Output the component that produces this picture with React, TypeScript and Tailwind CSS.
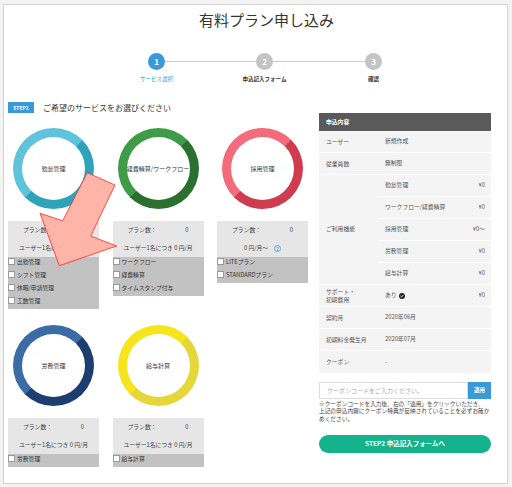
import React from "react";

type Service = {
  name: string;
  ring: string;
  perUser: boolean;
  options: string[];
};

const services: Service[] = [
  {
    name: "勤怠管理",
    ring: "bg-[conic-gradient(from_45deg,#2ea3ba_0_50%,#5fc3dc_50%_100%)]",
    perUser: true,
    options: ["出勤管理", "シフト管理", "休暇/申請管理", "工数管理"],
  },
  {
    name: "経費精算/ワークフロー",
    ring: "bg-[conic-gradient(from_45deg,#2b7030_0_50%,#3f9b48_50%_100%)]",
    perUser: true,
    options: ["ワークフロー", "経費精算", "タイムスタンプ付与"],
  },
  {
    name: "採用管理",
    ring: "bg-[conic-gradient(from_45deg,#cf3b4f_0_50%,#f36c7b_50%_100%)]",
    perUser: false,
    options: ["LITEプラン", "STANDARDプラン"],
  },
  {
    name: "労務管理",
    ring: "bg-[conic-gradient(from_45deg,#1d3e6e_0_50%,#3b6ca6_50%_100%)]",
    perUser: true,
    options: ["労務管理"],
  },
  {
    name: "給与計算",
    ring: "bg-[conic-gradient(from_45deg,#e5d63a_0_50%,#f6e41c_50%_100%)]",
    perUser: true,
    options: ["給与計算"],
  },
];

const features = [
  { name: "勤怠管理", price: "¥0" },
  { name: "ワークフロー/経費精算", price: "¥0" },
  { name: "採用管理", price: "¥0～" },
  { name: "労務管理", price: "¥0" },
  { name: "給与計算", price: "¥0" },
];

function QuestionIcon() {
  return (
    <svg width="7" height="7" viewBox="0 0 16 16" fill="none" stroke="#3a9ad9" strokeWidth="1.6">
      <circle cx="8" cy="8" r="7" />
      <path d="M5.8 6.2a2.3 2.3 0 0 1 4.4.6c0 1.5-2.2 1.8-2.2 3.2" strokeLinecap="round" />
      <circle cx="8" cy="12.1" r="0.6" fill="#3a9ad9" />
    </svg>
  );
}

function CheckBadge() {
  return (
    <svg width="6" height="6" viewBox="0 0 16 16">
      <circle cx="8" cy="8" r="8" fill="#222" />
      <path d="M4.3 8.3l2.5 2.4 5-5.2" stroke="#fff" strokeWidth="2.2" fill="none" strokeLinecap="round" strokeLinejoin="round" />
    </svg>
  );
}

function Step({ n, label, active }: { n: number; label: string; active?: boolean }) {
  return (
    <div className="flex w-[17px] flex-col items-center">
      <div
        className={
          active
            ? "flex h-[17px] w-[17px] items-center justify-center rounded-full bg-[#3a9ad9] text-[8px] font-bold text-white"
            : "flex h-[17px] w-[17px] items-center justify-center rounded-full bg-[#c4c4c4] text-[8px] font-bold text-white"
        }
      >
        {n}
      </div>
      <div
        className={
          active
            ? "mt-[5px] whitespace-nowrap text-[5.5px] leading-[8px] text-[#3a9ad9]"
            : "mt-[5px] whitespace-nowrap text-[5.5px] font-bold leading-[8px] text-[#333]"
        }
      >
        {label}
      </div>
    </div>
  );
}

function ServiceCard({ service }: { service: Service }) {
  return (
    <div className="flex flex-col">
      <div className={`mx-auto h-[81px] w-[81px] rounded-full p-[9px] ${service.ring}`}>
        <div className="flex h-full w-full items-center justify-center rounded-full bg-white text-[6px] text-[#333]">
          {service.name}
        </div>
      </div>
      <div className="mt-[12px] text-[5.8px] text-[#444]">
        <div className="bg-[#e6e6e6]">
          <div className="flex h-[18px] items-center justify-between px-[15px] pt-[1px]">
            <span>プラン数：</span>
            <span>0</span>
          </div>
          <div className="flex h-[18px] items-center justify-center gap-[6px]">
            {service.perUser ? (
              <span>ユーザー1名につき 0 円/月</span>
            ) : (
              <>
                <span>0 円/月～</span>
                <QuestionIcon />
              </>
            )}
          </div>
        </div>
        <div className="bg-[#c2c2c2]">
          {service.options.map((opt) => (
            <div key={opt} className="flex h-[13px] items-start">
              <span className="mt-[1px] h-[7px] w-[7px] border border-[#9a9a9a] bg-white" />
              <span className="ml-[2px] leading-[10px] text-[#333]">{opt}</span>
            </div>
          ))}
        </div>
      </div>
    </div>
  );
}

function Row({ label, value, price }: { label: React.ReactNode; value: React.ReactNode; price?: string }) {
  return (
    <div className="flex h-[22px] items-center border-b border-white">
      <div className="w-[60px] pl-[7px] leading-[8px]">{label}</div>
      <div className="flex flex-1 items-center justify-between pl-[6px] pr-[6px]">
        <span className="flex items-center gap-[2px]">{value}</span>
        {price && <span>{price}</span>}
      </div>
    </div>
  );
}

export default function App() {
  return (
    <div className="relative h-[487px] w-[512px] overflow-hidden bg-[#f3f3f3] pl-[3px] pt-[4px] font-['Noto_Sans_CJK_JP','Noto_Sans',sans-serif]">
      <div className="h-[480px] w-[505px] border border-[#d2d2d2] bg-white">
        <h1 className="mt-[4px] h-[22px] pl-[22px] text-center text-[15px] leading-[22px] text-[#333]">
          有料プラン申し込み
        </h1>

        <div className="mt-[22px] flex items-start pl-[144px]">
          <Step n={1} label="サービス選択" active />
          <div className="mt-[8px] h-px w-[91px] bg-[#cccccc]" />
          <Step n={2} label="申込記入フォーム" />
          <div className="mt-[8px] h-px w-[92px] bg-[#cccccc]" />
          <Step n={3} label="確認" />
        </div>

        <div className="mt-[19px] flex h-[11px] items-center pl-[4px]">
          <span className="flex h-[11px] w-[26px] items-center justify-center bg-[#3a9ad9] text-[5px] font-bold text-white">
            STEP1
          </span>
          <span className="ml-[9px] text-[8px] text-[#333]">ご希望のサービスをお選びください</span>
        </div>

        <div className="flex gap-[11px] pl-[4px]">
          <div className="grid grid-cols-[91px_91px_91px] items-start gap-x-[13.5px] gap-y-[16px] pt-[15px]">
            {services.map((s) => (
              <ServiceCard key={s.name} service={s} />
            ))}
          </div>

          <div className="w-[172px] text-[5.8px] text-[#555]">
            <div className="flex h-[18px] items-center bg-[#5a5a5a] pl-[7px] font-bold text-white">申込内容</div>
            <div className="bg-[#f4f4f4]">
              <Row label="ユーザー" value="新規作成" />
              <Row label="従業員数" value="無制限" />
              <div className="flex border-b border-white">
                <div className="flex w-[60px] items-center pl-[7px]">ご利用機能</div>
                <div className="flex-1">
                  {features.map((f, i) => (
                    <div
                      key={f.name}
                      className={
                        i < features.length - 1
                          ? "flex h-[22px] items-center justify-between border-b border-white px-[6px]"
                          : "flex h-[21px] items-center justify-between px-[6px]"
                      }
                    >
                      <span>{f.name}</span>
                      <span>{f.price}</span>
                    </div>
                  ))}
                </div>
              </div>
              <Row
                label={
                  <>
                    サポート・
                    <br />
                    初期費用
                  </>
                }
                value={
                  <>
                    あり
                    <CheckBadge />
                  </>
                }
                price="¥0"
              />
              <Row label="契約月" value="2020年06月" />
              <Row label="初期料金発生月" value="2020年07月" />
              <div className="flex h-[22px] items-center">
                <div className="w-[60px] pl-[7px]">クーポン</div>
                <div className="pl-[6px]">-</div>
              </div>
            </div>

            <div className="mt-[9px] flex h-[17px]">
              <div className="flex flex-1 items-center border border-[#dddddd] bg-white pl-[7px] text-[6px] text-[#aaaaaa]">
                クーポンコードをご入力ください。
              </div>
              <button className="flex w-[23px] items-center justify-center bg-[#3a9ad9] text-[5.5px] font-bold text-white">
                適用
              </button>
            </div>
            <p className="mt-[0.5px] whitespace-nowrap text-[5.7px] leading-[7.5px] text-[#444]">
              ※クーポンコードを入力後、右の「適用」をクリックいただき、
              <br />
              上記の申込内容にクーポン特典が反映されていることを必ずお確か
              <br />
              めください。
            </p>
            <button className="mt-[12.5px] flex h-[18px] w-full items-center justify-center rounded-full bg-[#15b38b] text-[6.5px] font-bold text-white">
              STEP2 申込記入フォームへ
            </button>
          </div>
        </div>
      </div>

      <svg className="pointer-events-none absolute inset-0" width="512" height="487" viewBox="0 0 512 487">
        <polygon
          points="59.3,265.7 40,213.3 62.7,220.7 87.3,172.7 115,185 90.7,236 116.7,246"
          fill="#ffb4a8"
          stroke="#ff2a2a"
          strokeWidth="0.8"
          strokeLinejoin="miter"
        />
      </svg>
    </div>
  );
}
